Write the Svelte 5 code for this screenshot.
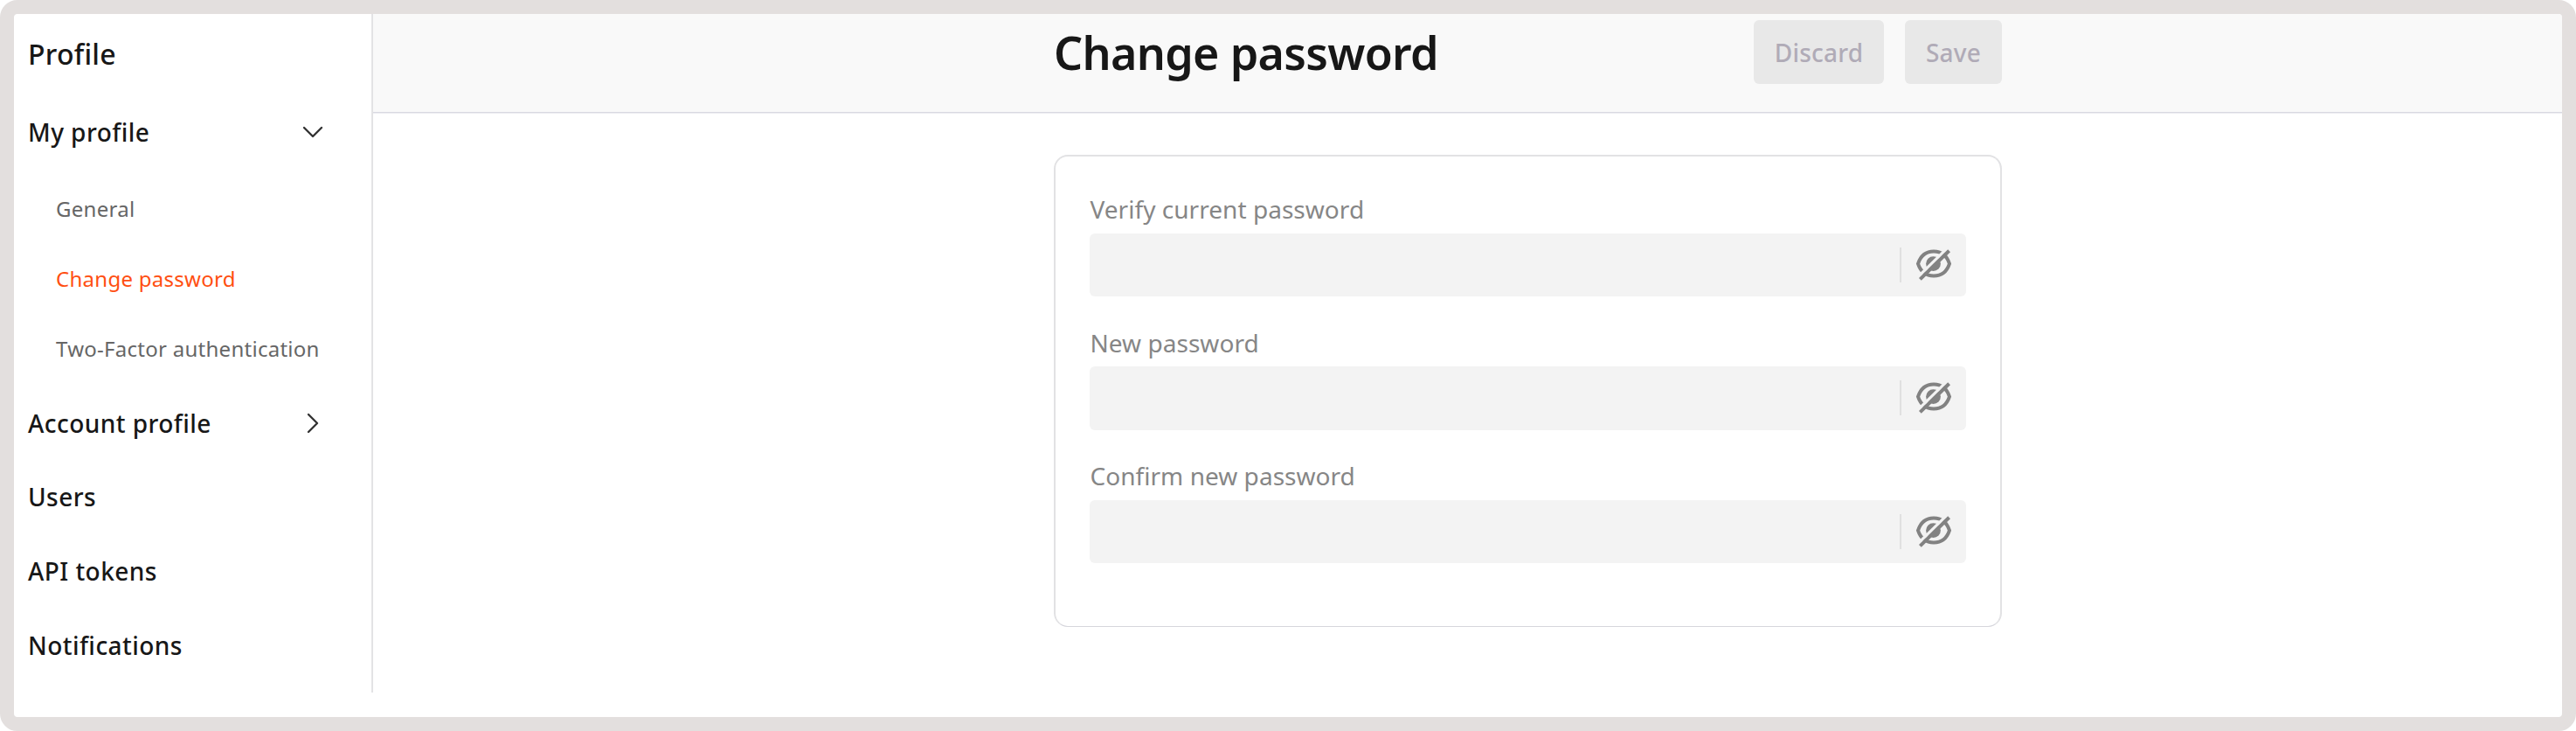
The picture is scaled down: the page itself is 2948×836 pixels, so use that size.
<script>
  const subItems = [
    { label: 'General', active: false },
    { label: 'Change password', active: true },
    { label: 'Two-Factor authentication', active: false },
  ];
  const links = ['Users', 'API tokens', 'Notifications'];
  const fields = ['Verify current password', 'New password', 'Confirm new password'];
</script>

<div class="frame">
  <nav class="sidebar">
    <div class="row heading">Profile</div>
    <div class="row first">
      <span>My profile</span>
      <svg class="chevron" viewBox="0 0 24 24"><path d="M2 7 12 17 22 7" /></svg>
    </div>
    <div class="sub">
      {#each subItems as item}
        <div class="sub-row" class:active={item.active}>{item.label}</div>
      {/each}
    </div>
    <div class="row">
      <span>Account profile</span>
      <svg class="chevron" viewBox="0 0 24 24"><path d="M7 2 17 12 7 22" /></svg>
    </div>
    {#each links as link}
      <div class="row">{link}</div>
    {/each}
  </nav>
  <main>
    <header>
      <div class="bar">
        <h1>Change password</h1>
        <div class="actions">
          <button class="discard" disabled>Discard</button>
          <button class="save" disabled>Save</button>
        </div>
      </div>
    </header>
    <form class="card">
      {#each fields as field}
        <div class="field">
          <div class="label">{field}</div>
          <div class="input">
            <svg class="eye" viewBox="0 0 42 38">
              <path class="ring" d="M3 17.6C6 8.6 12.6 3.5 21 3.5S36 8.6 39 17.6C36 26.6 29.4 31.5 21 31.5S6 26.6 3 17.6Z" />
              <circle class="pupil" cx="20.5" cy="17.6" r="8.4" />
              <path class="gap" d="M-1 36.5 40 -3.5" />
              <path class="slash" d="M5.4 35.4 38.6 2.8" />
            </svg>
          </div>
        </div>
      {/each}
    </form>
  </main>
</div>

<style>
  :global(body) {
    background: #fff;
  }
  .frame {
    box-sizing: border-box;
    width: 2948px;
    height: 836px;
    border: 16px solid #e3dfde;
    border-radius: 20px;
    background: #fff;
    display: flex;
    overflow: hidden;
    font-family: 'Noto Sans', sans-serif;
    color: #171717;
  }
  .sidebar {
    box-sizing: border-box;
    width: 411px;
    height: 776px;
    border-right: 2px solid #e3e3e5;
    padding-left: 16px;
    flex: none;
  }
  .row {
    height: 84.6px;
    display: flex;
    align-items: center;
    justify-content: space-between;
    padding-right: 55px;
    font-size: 28px;
    font-weight: 500;
    letter-spacing: 0.45px;
  }
  .row.heading {
    height: 90px;
    font-size: 32px;
    letter-spacing: 0.25px;
  }
  .row.first {
    height: 90px;
  }
  .chevron {
    width: 24px;
    height: 24px;
    fill: none;
    stroke: #333;
    stroke-width: 2.4;
    stroke-linecap: round;
    stroke-linejoin: round;
  }
  .sub {
    padding: 2px 0 3.6px 32px;
  }
  .sub-row {
    height: 80px;
    display: flex;
    align-items: center;
    font-size: 24px;
    letter-spacing: 0.27px;
    color: #666;
    white-space: nowrap;
  }
  .sub-row.active {
    color: #ff4f12;
  }
  main {
    flex: 1;
    display: flex;
    flex-direction: column;
  }
  header {
    box-sizing: border-box;
    height: 113px;
    background: #f9f9f9;
    border-bottom: 1px solid #d9d9e1;
    box-shadow: 0 1px #ededf1;
    padding-left: 779px;
  }
  .bar {
    width: 1085px;
    display: flex;
    justify-content: space-between;
  }
  h1 {
    margin: 0;
    font-size: 52px;
    font-weight: 600;
    line-height: 87px;
    letter-spacing: -0.68px;
    white-space: nowrap;
  }
  .actions {
    display: flex;
    gap: 24px;
    padding-top: 7px;
  }
  button {
    height: 73px;
    border: 0;
    border-radius: 6px;
    padding: 0;
    background: #e8e8e8;
    color: #b0abb7;
    font: 500 28px 'Noto Sans', sans-serif;
    letter-spacing: 0.2px;
  }
  .discard {
    width: 149px;
  }
  .save {
    width: 111px;
  }
  .card {
    box-sizing: border-box;
    width: 1085px;
    height: 540px;
    margin: 48px 0 0 779px;
    border: 2px solid #e2e2e4;
    border-bottom: 1px solid #d6d6dc;
    border-radius: 16px;
    padding: 41px 39px 0;
  }
  .field {
    height: 152.6px;
  }
  .label {
    height: 46.6px;
    padding-left: 0.5px;
    font-size: 28px;
    line-height: 38px;
    letter-spacing: 0.04px;
    color: #868686;
  }
  .input {
    height: 72.4px;
    border-radius: 6px;
    background: #f3f3f3;
    display: flex;
    align-items: center;
    justify-content: flex-end;
    padding-right: 16px;
  }
  .input::before {
    content: '';
    width: 2px;
    height: 40px;
    margin-right: 16px;
    background: #e0e0e0;
  }
  .eye {
    width: 42px;
    height: 38px;
  }
  .ring,
  .slash {
    fill: none;
    stroke: #828282;
    stroke-width: 4;
  }
  .gap {
    fill: none;
    stroke: #f3f3f3;
    stroke-width: 3.4;
  }
  .pupil {
    fill: #828282;
  }
</style>
